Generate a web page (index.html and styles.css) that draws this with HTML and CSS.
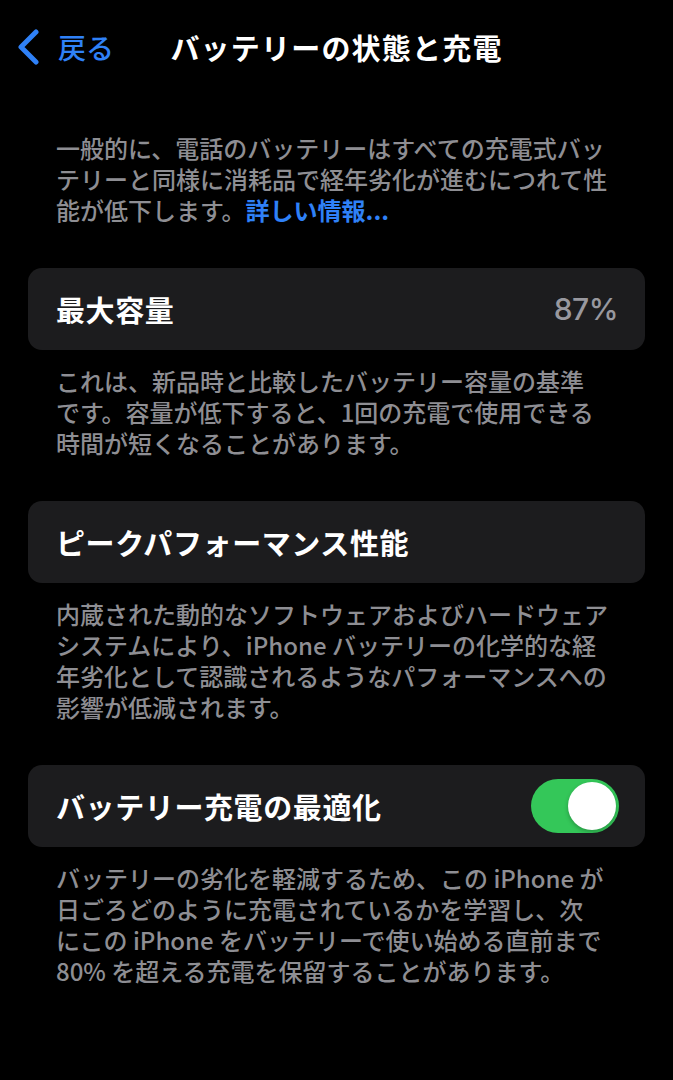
FILE: index.html
```html
<!DOCTYPE html>
<html lang="ja">
	<head>
		<meta charset="UTF-8" />
		<meta name="viewport" content="width=device-width, initial-scale=1.0" />
		<title>バッテリーの状態と充電</title>
		<link rel="stylesheet" href="styles.css">
	</head>
	<body>
		<div class="screen">
			<header class="nav">
				<a class="back" href="#">
					<svg class="chevron" viewBox="0 0 24 36" width="24" height="36">
						<path d="M20 3 L5 18 L20 33" fill="none" stroke="currentColor" stroke-width="5" stroke-linecap="round" stroke-linejoin="round" />
					</svg>
					<span>戻る</span>
				</a>
				<h1 class="nav-title">バッテリーの状態と充電</h1>
				<span></span>
			</header>

			<main class="content">
				<p class="note intro">
					一般的に、電話のバッテリーはすべての充電式バッ<br>
					テリーと同様に消耗品で経年劣化が進むにつれて性<br>
					能が低下します。<a class="link" href="#">詳しい情報...</a>
				</p>

				<section class="group">
					<div class="cell">
						<span class="cell-label">最大容量</span>
						<span class="cell-value">87%</span>
					</div>
					<p class="note">
						これは、新品時と比較したバッテリー容量の基準<br>
						です。容量が低下すると、1回の充電で使用できる<br>
						時間が短くなることがあります。
					</p>
				</section>

				<section class="group">
					<div class="cell">
						<span class="cell-label">ピークパフォーマンス性能</span>
					</div>
					<p class="note">
						内蔵された動的なソフトウェアおよびハードウェア<br>
						システムにより、iPhone バッテリーの化学的な経<br>
						年劣化として認識されるようなパフォーマンスへの<br>
						影響が低減されます。
					</p>
				</section>

				<section class="group">
					<div class="cell">
						<span class="cell-label">バッテリー充電の最適化</span>
						<span class="switch is-on"><span class="knob"></span></span>
					</div>
					<p class="note">
						バッテリーの劣化を軽減するため、この iPhone が<br>
						日ごろどのように充電されているかを学習し、次<br>
						にこの iPhone をバッテリーで使い始める直前まで<br>
						80% を超える充電を保留することがあります。
					</p>
				</section>
			</main>
		</div>
	</body>
</html>
```

FILE: styles.css
```css
:root {
	--bg: #000000;
	--cell: #1c1c1e;
	--label: #ffffff;
	--secondary: #8e8e93;
	--value: #98989f;
	--blue: #2f81f7;
	--green: #34c759;
}

* {
	margin: 0;
	padding: 0;
	box-sizing: border-box;
}

body {
	background: var(--bg);
	color: var(--label);
	font-family: "Noto Sans CJK JP", "Noto Sans", sans-serif;
	min-height: 1080px;
}

.screen {
	width: 673px;
	min-height: 1080px;
}

/* top navigation bar */
.nav {
	display: grid;
	grid-template-columns: 1fr auto 1fr;
	align-items: center;
	height: 94px;
	padding: 0 16px;
}

.back {
	display: flex;
	align-items: center;
	gap: 18px;
	color: var(--blue);
	text-decoration: none;
	font-size: 28px;
	font-weight: 500;
	line-height: 1;
}

.chevron {
	display: block;
}

.nav-title {
	font-size: 29px;
	font-weight: 700;
	line-height: 1;
	letter-spacing: 1.2px;
}

.content {
	padding: 38px 28px 0;
}

/* grey footnote text under each cell */
.note {
	color: var(--secondary);
	font-size: 24px;
	line-height: 31px;
	padding: 0 28px;
	white-space: nowrap;
	font-weight: 500;
}

.link {
	color: var(--blue);
	text-decoration: none;
	font-weight: 700;
}

.intro {
	margin-bottom: 43px;
}

.group {
	margin-bottom: 43px;
}

.group .note {
	margin-top: 15px;
}

.cell {
	display: flex;
	align-items: center;
	justify-content: space-between;
	height: 82px;
	padding: 0 27px 0 28px;
	background: var(--cell);
	border-radius: 14px;
}

.cell-label {
	font-size: 29px;
	font-weight: 700;
	letter-spacing: 0.6px;
}

.cell-value {
	font-family: "Inter", "Roboto", sans-serif;
	font-size: 30px;
	font-weight: 500;
	letter-spacing: -0.5px;
	color: var(--value);
}

/* on/off switch */
.switch {
	display: flex;
	align-items: center;
	justify-content: flex-end;
	width: 88px;
	height: 54px;
	padding: 3px;
	border-radius: 27px;
	background: #3a3a3c;
	margin-right: -1px;
}

.switch.is-on {
	background: var(--green);
}

.knob {
	width: 48px;
	height: 48px;
	border-radius: 50%;
	background: #ffffff;
	box-shadow: 0 2px 4px rgba(0, 0, 0, 0.25);
}
```
